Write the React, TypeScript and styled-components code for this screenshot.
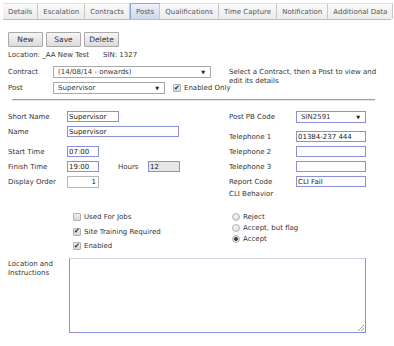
import React from "react";
import styled, { createGlobalStyle } from "styled-components";

const Global = createGlobalStyle`
  html, body { margin: 0; padding: 0; background: #fff; }
  body { font-family: "DejaVu Sans", Verdana, sans-serif; font-size: 7px; color: #333; }
  * { box-sizing: border-box; }
`;

const Page = styled.div`
  width: 394px;
  height: 346px;
  padding: 3px 3px 0 3px;
`;

const TabBar = styled.div`
  display: flex;
  height: 17px;
  border-bottom: 1px solid #9ec7d3;
`;

const Tab = styled.div<{ $active?: boolean }>`
  display: flex;
  align-items: center;
  padding: 0 5px;
  height: 16px;
  border-right: 1px solid #c8c8c8;
  border-top: 1px solid ${(p) => (p.$active ? "#8aa6cf" : "#e0e0e0")};
  border-left: ${(p) => (p.$active ? "1px solid #8aa6cf" : "none")};
  background: ${(p) =>
    p.$active ? "linear-gradient(#eef2fb, #cdd7ee)" : "linear-gradient(#fafafa, #ececec)"};
  color: #555;
  white-space: nowrap;
`;

const Toolbar = styled.div`
  display: flex;
  gap: 3px;
  margin: 12px 0 0 5px;
`;

const Button = styled.button<{ $w: number }>`
  width: ${(p) => p.$w}px;
  height: 15px;
  padding: 0;
  font: inherit;
  font-size: 7.5px;
  color: #333;
  border: 1px solid #a8a8a8;
  border-radius: 1px;
  background: linear-gradient(#f6f6f6, #dcdcdc);
`;

const InfoLine = styled.div`
  margin: 3px 0 0 5px;
  display: flex;
  gap: 14px;
  height: 10px;
  align-items: center;
`;

const SelectRow = styled.div`
  display: flex;
  align-items: center;
  margin-left: 5px;
  white-space: nowrap;
`;

const Label = styled.div<{ $w: number }>`
  width: ${(p) => p.$w}px;
  flex: none;
  white-space: nowrap;
`;

const Select = styled.div<{ $w: number; $blue?: boolean }>`
  width: ${(p) => p.$w}px;
  height: 12px;
  border: 1px solid ${(p) => (p.$blue ? "#8b8fd8" : "#a9a9a9")};
  background: #fff;
  display: flex;
  align-items: center;
  justify-content: space-between;
  padding: 0 5px 0 4px;
  flex: none;
`;

const Arrow = styled.span`
  font-size: 5px;
  color: #222;
`;

const ContractBlock = styled.div`
  display: flex;
  margin-top: 6px;
`;

const ContractLeft = styled.div`
  display: flex;
  flex-direction: column;
  gap: 4px;
  width: 208px;
  flex: none;
`;

const Hint = styled.div`
  margin-left: 18px;
  width: 150px;
  line-height: 9px;
  padding-top: 2px;
`;

const Check = styled.span<{ $checked?: boolean }>`
  display: inline-flex;
  width: 8px;
  height: 8px;
  border: 1px solid #b0b0b0;
  border-radius: 1px;
  background: linear-gradient(#f0f0f0, #d8d8d8);
  align-items: center;
  justify-content: center;
  font-size: 7px;
  line-height: 1;
  color: #222;
  flex: none;
`;

const Inline = styled.div<{ $ml?: number }>`
  display: flex;
  align-items: center;
  gap: 3px;
  margin-left: ${(p) => p.$ml ?? 0}px;
  white-space: nowrap;
`;

const Divider = styled.div`
  margin: 5px 16px 0 9px;
  height: 2px;
  border-top: 1px solid #a0a0a0;
  border-bottom: 1px solid #e4e4e4;
`;

const FormArea = styled.div`
  display: flex;
  margin-top: 10px;
  padding-left: 5px;
`;

const Column = styled.div<{ $w: number }>`
  width: ${(p) => p.$w}px;
  display: flex;
  flex-direction: column;
`;

const FieldRow = styled.div<{ $mt?: number }>`
  display: flex;
  align-items: center;
  height: 11px;
  margin-top: ${(p) => p.$mt ?? 4}px;
`;

const Input = styled.div<{ $w: number; $gray?: boolean; $right?: boolean; $plain?: boolean }>`
  width: ${(p) => p.$w}px;
  height: ${(p) => (p.$plain ? 12 : 11)}px;
  border: 1px solid ${(p) => (p.$plain ? "#b8b8b8" : "#8b8fd8")};
  background: ${(p) => (p.$gray ? "#e6e6e6" : "#fff")};
  display: flex;
  align-items: center;
  justify-content: ${(p) => (p.$right ? "flex-end" : "flex-start")};
  padding: 0 2px 0 1px;
  color: #222;
  flex: none;
  white-space: nowrap;
`;

const Options = styled.div`
  display: flex;
  margin-top: 14px;
`;

const CheckGroup = styled.div`
  display: flex;
  flex-direction: column;
  gap: 6.5px;
  margin-left: 70px;
  width: 159px;
`;

const RadioGroup = styled.div`
  display: flex;
  flex-direction: column;
  gap: 3px;
`;

const Radio = styled.span<{ $on?: boolean }>`
  width: 8px;
  height: 8px;
  border-radius: 50%;
  border: 1px solid #b4b4b4;
  background: ${(p) =>
    p.$on
      ? "radial-gradient(circle, #444 0 1.6px, #e0e0e0 2.2px)"
      : "radial-gradient(circle at 40% 35%, #f8f8f8, #d4d4d4)"};
  flex: none;
`;

const TextRow = styled.div`
  display: flex;
  margin-top: 8px;
  padding-left: 5px;
`;

const TextLabel = styled.div`
  width: 61px;
  line-height: 9px;
  padding-top: 2px;
`;

const TextArea = styled.div`
  width: 297px;
  height: 75px;
  border: 1px solid #8b8fd8;
  border-top-color: #d0d0e4;
  position: relative;
  background: #fff;
`;

const Grip = styled.svg`
  position: absolute;
  right: 1px;
  bottom: 1px;
`;

const tabs = [
  "Details",
  "Escalation",
  "Contracts",
  "Posts",
  "Qualifications",
  "Time Capture",
  "Notification",
  "Additional Data",
];

export default function App() {
  return (
    <Page>
      <Global />
      <TabBar>
        {tabs.map((t) => (
          <Tab key={t} $active={t === "Posts"}>
            {t}
          </Tab>
        ))}
      </TabBar>
      <Toolbar>
        <Button $w={35}>New</Button>
        <Button $w={35}>Save</Button>
        <Button $w={35}>Delete</Button>
      </Toolbar>
      <InfoLine>
        <span>Location: _AA New Test</span>
        <span>SIN: 1327</span>
      </InfoLine>
      <ContractBlock>
        <ContractLeft>
          <SelectRow>
            <Label $w={45}>Contract</Label>
            <Select $w={158}>
              <span>(14/08/14 - onwards)</span>
              <Arrow>▼</Arrow>
            </Select>
          </SelectRow>
          <SelectRow>
            <Label $w={45}>Post</Label>
            <Select $w={112}>
              <span>Supervisor</span>
              <Arrow>▼</Arrow>
            </Select>
            <Inline $ml={8}>
              <Check $checked>✔</Check>
              <span>Enabled Only</span>
            </Inline>
          </SelectRow>
        </ContractLeft>
        <Hint>Select a Contract, then a Post to view and edit its details</Hint>
      </ContractBlock>
      <Divider />
      <FormArea>
        <Column $w={221}>
          <FieldRow $mt={0}>
            <Label $w={59}>Short Name</Label>
            <Input $w={52}>Supervisor</Input>
          </FieldRow>
          <FieldRow>
            <Label $w={59}>Name</Label>
            <Input $w={112}>Supervisor</Input>
          </FieldRow>
          <FieldRow $mt={9}>
            <Label $w={59}>Start Time</Label>
            <Input $w={32}>07:00</Input>
          </FieldRow>
          <FieldRow>
            <Label $w={59}>Finish Time</Label>
            <Input $w={32}>19:00</Input>
            <Label $w={30} style={{ marginLeft: 19 }}>Hours</Label>
            <Input $w={32} $gray>12</Input>
          </FieldRow>
          <FieldRow $mt={4}>
            <Label $w={59}>Display Order</Label>
            <Input $w={32} $right $plain>1</Input>
          </FieldRow>
        </Column>
        <Column $w={150}>
          <FieldRow $mt={0}>
            <Label $w={67}>Post PB Code</Label>
            <Select $w={70} $blue>
              <span>SIN2591</span>
              <Arrow>▼</Arrow>
            </Select>
          </FieldRow>
          <FieldRow $mt={9}>
            <Label $w={67}>Telephone 1</Label>
            <Input $w={70}>01384-237 444</Input>
          </FieldRow>
          <FieldRow>
            <Label $w={67}>Telephone 2</Label>
            <Input $w={70} />
          </FieldRow>
          <FieldRow>
            <Label $w={67}>Telephone 3</Label>
            <Input $w={70} />
          </FieldRow>
          <FieldRow>
            <Label $w={67}>Report Code</Label>
            <Input $w={70}>CLI Fail</Input>
          </FieldRow>
          <FieldRow $mt={1}>
            <Label $w={67}>CLI Behavior</Label>
          </FieldRow>
        </Column>
      </FormArea>
      <Options>
        <CheckGroup>
          <Inline>
            <Check />
            <span>Used For Jobs</span>
          </Inline>
          <Inline>
            <Check $checked>✔</Check>
            <span>Site Training Required</span>
          </Inline>
          <Inline>
            <Check $checked>✔</Check>
            <span>Enabled</span>
          </Inline>
        </CheckGroup>
        <RadioGroup>
          <Inline>
            <Radio />
            <span>Reject</span>
          </Inline>
          <Inline>
            <Radio />
            <span>Accept, but flag</span>
          </Inline>
          <Inline>
            <Radio $on />
            <span>Accept</span>
          </Inline>
        </RadioGroup>
      </Options>
      <TextRow>
        <TextLabel>
          Location and
          <br />
          Instructions
        </TextLabel>
        <TextArea>
          <Grip width="6" height="6" viewBox="0 0 6 6">
            <path d="M6 0L0 6M6 3L3 6" stroke="#888" strokeWidth="0.8" />
          </Grip>
        </TextArea>
      </TextRow>
    </Page>
  );
}
